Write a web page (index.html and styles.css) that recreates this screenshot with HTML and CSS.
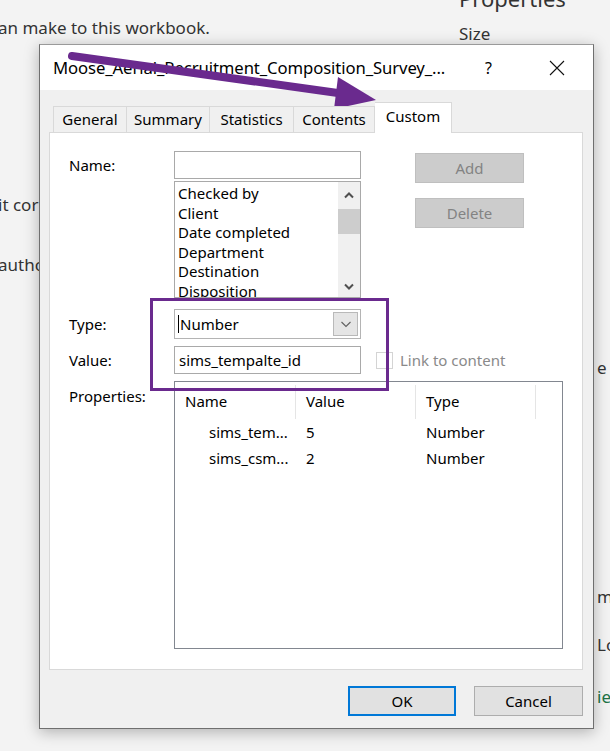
FILE: index.html
```html
<!DOCTYPE html>
<html>
<head>
<meta charset="utf-8">
<link rel="stylesheet" href="styles.css">
</head>
<body>
<div class="page">
  <div class="page-left">
    <p class="bg-text first">an make to this workbook.</p>
    <p class="bg-text l2">it cor</p>
    <p class="bg-text l3">autho</p>
  </div>
  <div class="page-right">
    <p class="bg-heading">Properties</p>
    <p class="bg-text size">Size</p>
    <p class="bg-text edge e1">e</p>
    <p class="bg-text edge e2">me</p>
    <p class="bg-text edge e3">Lo</p>
    <p class="bg-text edge e4 green">ies</p>
  </div>
</div>

<div class="dialog">
  <div class="titlebar">
    <span class="title">Moose_Aerial_Recruitment_Composition_Survey_...</span>
    <span class="help">?</span>
    <svg class="close" width="16" height="16" viewBox="0 0 16 16"><path d="M1 1 L15 15 M15 1 L1 15" stroke="#111" stroke-width="1.1" fill="none"/></svg>
  </div>
  <div class="body">
    <div class="tabs">
      <div class="tab t1">General</div>
      <div class="tab t2">Summary</div>
      <div class="tab t3">Statistics</div>
      <div class="tab t4">Contents</div>
      <div class="tab active">Custom</div>
    </div>
    <div class="panel">
      <div class="label name-label">Name:</div>
      <div class="textbox name-box"></div>
      <div class="side-buttons">
        <div class="btn disabled">Add</div>
        <div class="btn disabled">Delete</div>
      </div>

      <div class="listbox">
        <div class="list-items">
          <div>Checked by</div>
          <div>Client</div>
          <div>Date completed</div>
          <div>Department</div>
          <div>Destination</div>
          <div>Disposition</div>
        </div>
        <div class="scrollbar">
          <svg class="sb-arrow" width="12" height="8" viewBox="0 0 12 8"><path d="M2 6.5 L6 2.5 L10 6.5" stroke="#505050" stroke-width="2" fill="none"/></svg>
          <div class="thumb"></div>
          <div class="sb-space"></div>
          <svg class="sb-arrow" width="12" height="8" viewBox="0 0 12 8"><path d="M2 1.5 L6 5.5 L10 1.5" stroke="#505050" stroke-width="2" fill="none"/></svg>
        </div>
      </div>

      <div class="label type-label">Type:</div>
      <div class="combo">
        <span class="caret"></span><span class="combo-text">Number</span>
        <div class="drop">
          <svg width="12" height="8" viewBox="0 0 12 8"><path d="M1.5 2 L6 6.5 L10.5 2" stroke="#606060" stroke-width="1.1" fill="none"/></svg>
        </div>
      </div>

      <div class="label value-label">Value:</div>
      <div class="textbox value-box">sims_tempalte_id</div>
      <div class="link">
        <span class="checkbox"></span><span>Link to content</span>
      </div>

      <div class="label props-label">Properties:</div>
      <div class="listview">
        <div class="lv-head">
          <div class="col c1">Name</div>
          <div class="col c2">Value</div>
          <div class="col c3">Type</div>
        </div>
        <div class="lv-row">
          <div class="col c1 indent">sims_tem...</div>
          <div class="col c2">5</div>
          <div class="col c3">Number</div>
        </div>
        <div class="lv-row">
          <div class="col c1 indent">sims_csm...</div>
          <div class="col c2">2</div>
          <div class="col c3">Number</div>
        </div>
      </div>
    </div>
    <div class="footer">
      <div class="btn primary">OK</div>
      <div class="btn">Cancel</div>
    </div>
  </div>
</div>

<div class="highlight"></div>

<svg class="arrow" width="610" height="130" viewBox="0 0 610 130">
  <path d="M72 56 L345 94" stroke="#6a2a8e" stroke-width="8" stroke-linecap="round" fill="none"/>
  <polygon points="338,77 376,100 334,109" fill="#6a2a8e"/>
</svg>
</body>
</html>
```

FILE: styles.css
```css
* { box-sizing: border-box; }
html, body { margin: 0; padding: 0; }
body {
  width: 610px;
  height: 751px;
  overflow: hidden;
  background: #f3f3f3;
  font-family: "Noto Sans", "Open Sans", sans-serif;
  position: relative;
}
p { margin: 0; }

.page {
  display: grid;
  grid-template-columns: 459px 151px;
  color: #333;
}
.bg-text { font-size: 17px; line-height: 22px; white-space: nowrap; }
.page-left { margin-left: -2px; }
.first { margin-top: 17px; }
.l2 { margin-top: 155px; }
.l3 { margin-top: 38px; }
.bg-heading { font-size: 22px; line-height: 26px; margin-top: -15px; }
.size { margin-top: 12px; }
.edge { padding-left: 138px; }
.e1 { margin-top: 312px; }
.e2 { margin-top: 207px; }
.e3 { margin-top: 26px; }
.e4 { margin-top: 30px; }
.green { color: #217346; }

.dialog {
  position: absolute;
  left: 39px;
  top: 44px;
  width: 555px;
  height: 685px;
  background: #f0f0f0;
  border: 1px solid #6f6f6f;
  border-top-color: #9a9a9a;
  box-shadow: 0 3px 14px rgba(0,0,0,0.28);
  display: flex;
  flex-direction: column;
  color: #000;
}
.titlebar {
  height: 45px;
  background: #fff;
  display: flex;
  align-items: center;
  padding-left: 13px;
}
.title { font-size: 16.7px; letter-spacing: -0.1px; width: 432px; white-space: nowrap; }
.help { font-size: 16px; width: 64px; }
.close { margin-top: 1px; }

.body { padding: 12px 10px 0 9px; display: flex; flex-direction: column; flex: 1; }
.tabs { display: flex; padding-left: 4px; height: 30px; align-items: flex-end; position: relative; z-index: 1; }
.tab {
  font-size: 15px;
  height: 26px;
  line-height: 24px;
  text-align: center;
  border: 1px solid #d9d9d9;
  border-bottom: none;
  border-right: none;
  background: #f0f0f0;
  white-space: nowrap;
}
.t1 { width: 73px; }
.t2 { width: 83px; }
.t3 { width: 84px; }
.t4 { width: 82px; border-right: 1px solid #d9d9d9; }
.tab.active {
  width: 77px;
  height: 31px;
  background: #fff;
  line-height: 26px;
  margin-bottom: -1px;
  border-right: 1px solid #d9d9d9;
  border-left: none;
}

.panel {
  height: 538px;
  width: 534px;
  background: #fff;
  border: 1px solid #d9d9d9;
  display: grid;
  grid-template-columns: 105px 187px 1fr;
  grid-template-rows: 28px 119px 41px 35px 275px;
  padding: 18px 0 0 19px;
  font-size: 15px;
}
.label { line-height: 20px; }
.name-label { grid-column: 1; grid-row: 1; align-self: center; }
.name-box { grid-column: 2; grid-row: 1; height: 28px; }
.side-buttons {
  grid-column: 3; grid-row: 1 / 3;
  display: flex; flex-direction: column; gap: 15px;
  padding: 2px 0 0 54px;
}
.textbox { border: 1px solid #a9a9a9; background: #fff; padding: 3px 4px; line-height: 20px; }
.listbox {
  grid-column: 2; grid-row: 2;
  align-self: end;
  height: 117px;
  border: 1px solid #a9a9a9;
  display: flex;
  overflow: hidden;
}
.list-items { flex: 1; padding: 2px 0 0 3px; line-height: 19.6px; white-space: nowrap; }
.scrollbar {
  width: 22px;
  background: #f0f0f0;
  display: flex;
  flex-direction: column;
  align-items: center;
  padding-top: 9px;
}
.thumb { width: 22px; height: 25px; background: #cdcdcd; margin-top: 4px; }
.sb-space { flex: 1; }
.sb-arrow { margin-bottom: 6px; }

.type-label { grid-column: 1; grid-row: 3; align-self: end; height: 30px; display: flex; align-items: center; }
.combo {
  grid-column: 2; grid-row: 3;
  align-self: end;
  height: 30px;
  border: 1px solid #b4b4b4;
  background: #fff;
  display: flex; align-items: center;
  padding: 0 2px 0 3px;
}
.caret { width: 1px; height: 18px; background: #000; margin-right: 1px; }
.combo-text { flex: 1; }
.drop {
  width: 25px; height: 24px;
  background: #e5e5e5;
  border: 1px solid #b9b9b9;
  display: flex; align-items: center; justify-content: center;
}

.value-label { grid-column: 1; grid-row: 4; align-self: end; height: 28px; display: flex; align-items: center; }
.value-box { grid-column: 2; grid-row: 4; align-self: end; height: 28px; }
.link {
  grid-column: 3; grid-row: 4; align-self: end;
  height: 28px;
  display: flex; align-items: center; gap: 7px;
  padding-left: 15px;
  color: #8a8a8a;
}
.checkbox { width: 17px; height: 17px; border: 1px solid #d4d4d4; background: #fff; }

.props-label { grid-column: 1; grid-row: 5; align-self: start; margin-top: 12px; }
.listview {
  grid-column: 2 / 4; grid-row: 5;
  align-self: end;
  width: 389px;
  height: 268px;
  border: 1px solid #828790;
  background: #fff;
}
.lv-head { display: flex; height: 37px; padding-top: 3px; }
.lv-head .col { border-right: 1px solid #e5e5e5; height: 34px; line-height: 32px; }
.col { width: 120px; padding-left: 10px; white-space: nowrap; }
.c1 { width: 121px; }
.lv-row { display: flex; height: 26px; line-height: 26px; }
.indent { padding-left: 34px; }

.footer {
  display: flex; justify-content: flex-end; gap: 18px;
  padding-top: 16px;
}
.btn {
  width: 109px; height: 30px;
  background: #e1e1e1;
  border: 1px solid #adadad;
  font-size: 15px;
  display: flex; align-items: center; justify-content: center;
}
.btn.primary { border: 2px solid #0078d7; width: 108px; }
.btn.disabled { background: #cccccc; border-color: #bfbfbf; color: #838383; }

.highlight {
  position: absolute;
  left: 150px; top: 298px;
  width: 239px; height: 93px;
  border: 3px solid #6a2a8e;
}
.arrow { position: absolute; left: 0; top: 0; }
```
